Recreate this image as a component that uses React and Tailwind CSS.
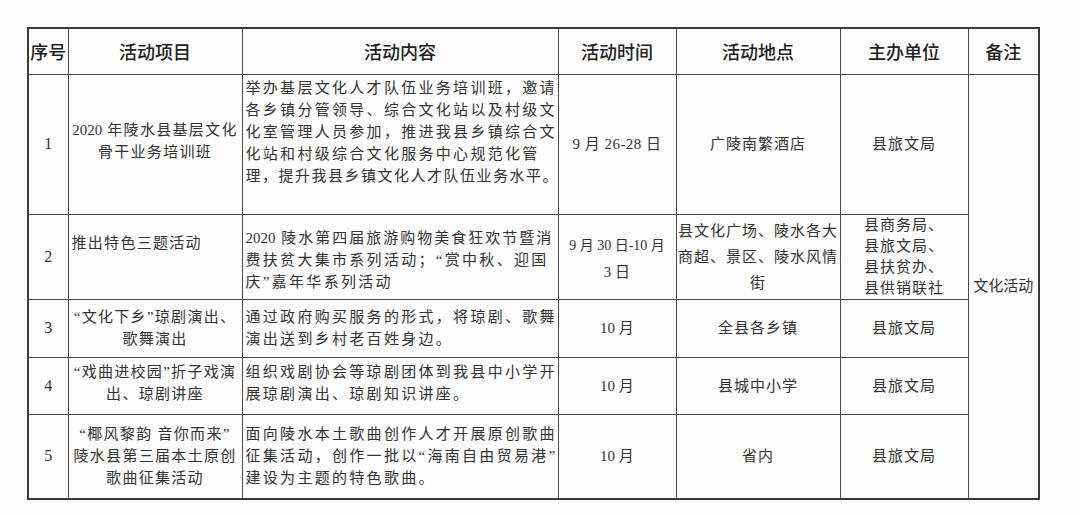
const serif = "font-['Liberation_Serif','Noto_Sans_CJK_SC',serif] text-[15px] text-[#333] leading-[22px]"

function Lines({ items, className = '' }) {
  return (
    <div className={className}>
      {items.map((l, i) => (
        <div key={i} className="whitespace-nowrap">{l}</div>
      ))}
    </div>
  )
}

// digits in the scan are set tighter than the CJK text
const N = ({ children }) => <span className="tracking-normal">{children}</span>

const td = 'border border-[#4a4a4a] p-0 align-middle'

export default function App() {
  const heads = ['序号', '活动项目', '活动内容', '活动时间', '活动地点', '主办单位', '备注']
  return (
    <div className="w-[1080px] h-[515px] overflow-hidden bg-[#fcfcfc] pt-[27px] pl-[27px]">
      <table className={`table-fixed border-collapse border-2 border-[#3a3a3a] w-[1011px] ${serif}`}>
        <colgroup>
          <col className="w-[40px]" />
          <col className="w-[174px]" />
          <col className="w-[316px]" />
          <col className="w-[118px]" />
          <col className="w-[164px]" />
          <col className="w-[128px]" />
          <col className="w-[71px]" />
        </colgroup>
        <thead>
          <tr className="h-[46px]">
            {heads.map((h) => (
              <th key={h} className={`${td} text-center font-['Noto_Sans_CJK_SC',sans-serif] text-[18px] font-medium text-[#222] leading-none`}>{h}</th>
            ))}
          </tr>
        </thead>
        <tbody>
          <tr className="h-[140px]">
            <td className={`${td} text-center text-[16px]`}>1</td>
            <td className={`${td} text-center tracking-[1.3px]`}>
              <Lines items={[<><N>2020</N> 年陵水县基层文化</>, '骨干业务培训班']} className="pb-[6px]" />
            </td>
            <td className={`${td} !align-top pl-[3px] pt-[2px] tracking-[2.3px]`}>
              <Lines items={[
                '举办基层文化人才队伍业务培训班，邀请',
                '各乡镇分管领导、综合文化站以及村级文',
                '化室管理人员参加，推进我县乡镇综合文',
                '化站和村级综合文化服务中心规范化管',
              ]} />
              <div className="whitespace-nowrap tracking-[1.5px]">理，提升我县乡镇文化人才队伍业务水平。</div>
            </td>
            <td className={`${td} text-center tracking-[0.5px]`}>9 月 26-28 日</td>
            <td className={`${td} text-center tracking-[1px]`}>广陵南繁酒店</td>
            <td className={`${td} text-center tracking-[1px]`}>县旅文局</td>
            <td rowSpan={5} className={`${td} text-center`}>文化活动</td>
          </tr>
          <tr className="h-[85px]">
            <td className={`${td} text-center text-[16px]`}>2</td>
            <td className={`${td} !align-top pl-[3px] pt-[17px] tracking-[1.3px]`}>推出特色三题活动</td>
            <td className={`${td} pl-[3px] pt-[6px] tracking-[2.3px]`}>
              <Lines items={[
                <span className="tracking-[2px]"><N>2020</N> 陵水第四届旅游购物美食狂欢节暨消</span>,
                '费扶贫大集市系列活动；“赏中秋、迎国',
                '庆”嘉年华系列活动',
              ]} />
            </td>
            <td className={`${td} text-center pt-[4px] leading-[26px]`}>
              <Lines items={[<span className="text-[14px]">9 月 30 日-10 月</span>, '3 日']} />
            </td>
            <td className={`${td} text-center tracking-[1px] leading-[26px]`}>
              <Lines items={['县文化广场、陵水各大', '商超、景区、陵水风情', '街']} />
            </td>
            <td className={`${td} text-center tracking-[1px] leading-[21px]`}>
              <Lines items={['县商务局、', '县旅文局、', '县扶贫办、', '县供销联社']} className="inline-block text-left" />
            </td>
          </tr>
          <tr className="h-[58px]">
            <td className={`${td} text-center text-[16px]`}>3</td>
            <td className={`${td} text-center tracking-[1.3px]`}>
              <Lines items={['“文化下乡”琼剧演出、', '歌舞演出']} />
            </td>
            <td className={`${td} pl-[3px] tracking-[2.3px]`}>
              <Lines items={['通过政府购买服务的形式，将琼剧、歌舞', '演出送到乡村老百姓身边。']} />
            </td>
            <td className={`${td} text-center`}>10 月</td>
            <td className={`${td} text-center tracking-[1px]`}>全县各乡镇</td>
            <td className={`${td} text-center tracking-[1px]`}>县旅文局</td>
          </tr>
          <tr className="h-[57px]">
            <td className={`${td} text-center text-[16px]`}>4</td>
            <td className={`${td} text-center tracking-[1.3px]`}>
              <Lines items={['“戏曲进校园”折子戏演', '出、琼剧讲座']} className="pb-[6px]" />
            </td>
            <td className={`${td} pl-[3px] tracking-[2.3px]`}>
              <Lines items={['组织戏剧协会等琼剧团体到我县中小学开', '展琼剧演出、琼剧知识讲座。']} className="pb-[6px]" />
            </td>
            <td className={`${td} text-center`}>10 月</td>
            <td className={`${td} text-center tracking-[1px]`}>县城中小学</td>
            <td className={`${td} text-center tracking-[1px]`}>县旅文局</td>
          </tr>
          <tr className="h-[85px]">
            <td className={`${td} text-center text-[16px]`}>5</td>
            <td className={`${td} text-center tracking-[1.3px]`}>
              <Lines items={['“椰风黎韵 音你而来”', '陵水县第三届本土原创', '歌曲征集活动']} />
            </td>
            <td className={`${td} pl-[3px] tracking-[2.3px]`}>
              <Lines items={['面向陵水本土歌曲创作人才开展原创歌曲', '征集活动，创作一批以“海南自由贸易港”', '建设为主题的特色歌曲。']} />
            </td>
            <td className={`${td} text-center`}>10 月</td>
            <td className={`${td} text-center tracking-[1px]`}>省内</td>
            <td className={`${td} text-center tracking-[1px]`}>县旅文局</td>
          </tr>
        </tbody>
      </table>
    </div>
  )
}
